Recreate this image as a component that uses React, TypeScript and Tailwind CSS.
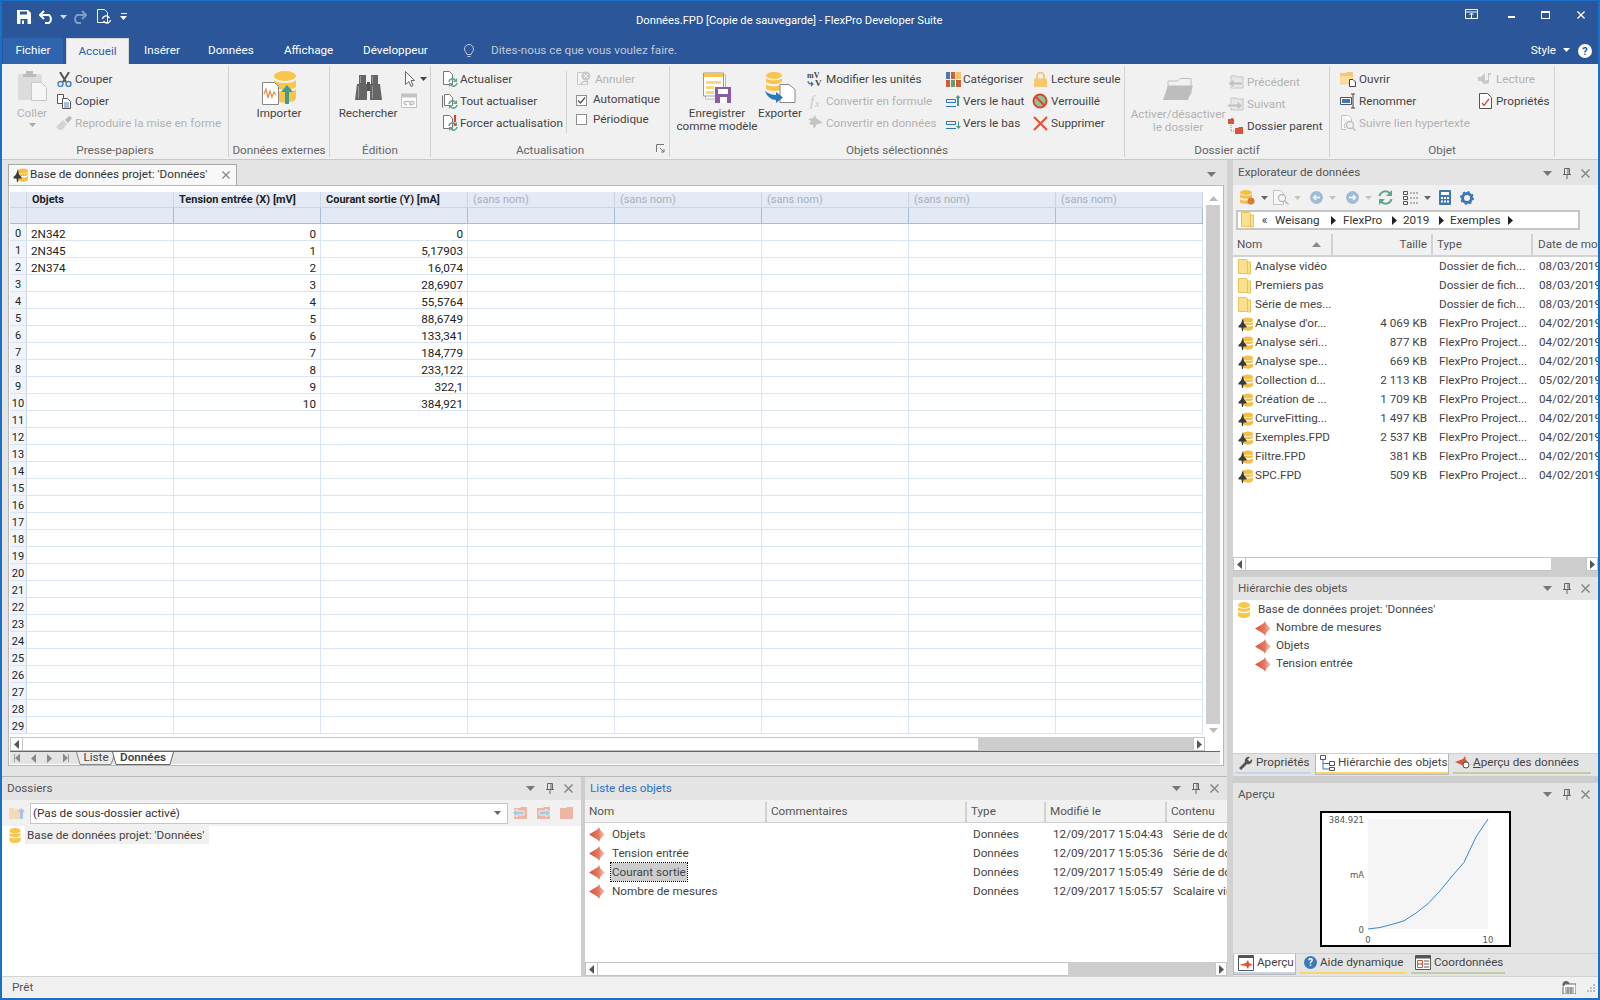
import type { ReactNode } from "react";

/* ---------- small drawings ---------- */
const Ico = ({ w = 16, h = 16, vb, children, className = "" }: { w?: number; h?: number; vb?: string; children: ReactNode; className?: string }) => (
  <svg width={w} height={h} viewBox={vb ?? `0 0 ${w} ${h}`} className={`shrink-0 ${className}`}>
    {children}
  </svg>
);

const Caret = ({ color = "#666" }: { color?: string }) => (
  <Ico w={7} h={4}><path d="M0 0h7L3.5 4z" fill={color} /></Ico>
);

const Tri = () => <Ico w={5} h={9}><path d="M0 0l5 4.5L0 9z" fill="#222" /></Ico>;

const Db = ({ w = 12, h = 16 }: { w?: number; h?: number }) => (
  <Ico w={w} h={h} vb="0 0 12 16">
    <ellipse cx="6" cy="3" rx="6" ry="3" fill="#f9c64b" />
    <path d="M0 5c1 2 11 2 12 0v2.500c0 3-12 3-12 0z" fill="#f9c64b" />
    <path d="M0 9.500c1 2 11 2 12 0V13c0 4-12 4-12 0z" fill="#f9c64b" />
  </Ico>
);

const ProjectIcon = () => (
  <Ico w={15} h={14}>
    <ellipse cx="10" cy="3" rx="5" ry="2.500" fill="#f4bf45" />
    <path d="M5 4.500c1 2 9 2 10 0v2c0 2-10 2-10 0zM5 8c1 2 9 2 10 0v3c0 3.500-10 3.500-10 0z" fill="#f4bf45" />
    <path d="M5 1l1 5.500 2.500 2.500v1.500H5.500L5 14H4l-.5-3.500H.5V9L3 6.500z" fill="#3a3a3a" />
  </Ico>
);

const Folder = () => (
  <Ico w={13} h={16}>
    <path d="M.5.500h8l1 1v13h-9z" fill="#fbe08f" stroke="#e8c35c" />
    <path d="M9.500 3h3v12h-3z" fill="#fbe08f" stroke="#e8c35c" />
  </Ico>
);

const DataIcon = ({ w = 16 }: { w?: number }) => (
  <Ico w={w} h={15} vb="0 0 16 15">
    <defs>
      <linearGradient id="dg" x1="0" x2="1" y1="0" y2="0">
        <stop offset="0" stopColor="#d8553a" />
        <stop offset="0.6" stopColor="#e27a62" />
        <stop offset="1" stopColor="#f6d3c8" />
      </linearGradient>
    </defs>
    <path d="M0 7.500L9 2l1-2 1.500 3.500L16 7.500l-4.500 4L10 15l-1-2z" fill="url(#dg)" />
  </Ico>
);

const GreenCycle = ({ x = 6, y = 7, s = 1 }: { x?: number; y?: number; s?: number }) => (
  <g transform={`translate(${x} ${y}) scale(${s})`} fill="none" stroke="#5fa68f" strokeWidth="1.600">
    <path d="M1 4a3.500 3.500 0 0 1 6-2l1 1" />
    <path d="M9 5a3.500 3.500 0 0 1-6 2L2 6" />
    <path d="M8.500 .5v3h-3M1.500 8.500v-3h3" strokeWidth="1.200" />
  </g>
);

const RefreshDoc = ({ bang, stack }: { bang?: boolean; stack?: boolean }) => (
  <Ico w={16} h={16}>
    {stack && <path d="M.5 2.500v12" stroke="#777" />}
    <path d={stack ? "M2.500 1.500h5l3 3v8h-8z" : "M1.500 .5h6l3 3v10h-9z"} fill="#fff" stroke="#777" />
    <GreenCycle />
    {bang && <path d="M13 0v7M13 8.500v2" stroke="#d9402a" strokeWidth="2.200" />}
  </Ico>
);

const Scissors = () => (
  <Ico w={15} h={15}>
    <path d="M3 0l6 10M12 0L6 10" stroke="#555" strokeWidth="2" />
    <circle cx="3.500" cy="12" r="2.500" fill="none" stroke="#4a7fb8" strokeWidth="1.400" />
    <circle cx="11.500" cy="12" r="2.500" fill="none" stroke="#4a7fb8" strokeWidth="1.400" />
  </Ico>
);

const Copy = () => (
  <Ico w={15} h={15}>
    <path d="M.5.500h6v9h-6z" fill="#fff" stroke="#555" />
    <path d="M5.500 4.500h5l3 3v7h-8z" fill="#fff" stroke="#555" />
    <path d="M7 9h5M7 11h5M7 13h5" stroke="#4a7fb8" />
  </Ico>
);

const Brush = () => (
  <Ico w={16} h={14}>
    <path d="M0 11L7 4l4 4-5 6H3z" fill="#d4d4d4" />
    <path d="M9 4l4-4 3 2-4 5z" fill="#b8b8b8" />
  </Ico>
);

const Clipboard = () => (
  <Ico w={29} h={30}>
    <rect x="0" y="3" width="24" height="26" rx="2" fill="#dcdcdc" />
    <path d="M8 3V0h7v3h3v3H5V3z" fill="#bcbcbc" />
    <path d="M13.500 11.500h10l5 5v13h-15z" fill="#f6f6f6" stroke="#c8c8c8" />
  </Ico>
);

const Import = () => (
  <Ico w={34} h={34}>
    <ellipse cx="23" cy="5" rx="11" ry="5" fill="#f9c64b" />
    <path d="M12 9c2 4 20 4 22 0v6c0 5-22 5-22 0zM12 18c2 4 20 4 22 0v9c0 6-22 6-22 0z" fill="#f9c64b" />
    <path d="M.5 11.500h12l4 4v18H.5z" fill="#fff" stroke="#888" />
    <path d="M2 23l2-5 2 9 2-7 2 6 2-5 2 3" fill="none" stroke="#e58a4c" strokeWidth="1.200" />
    <path d="M23 33V21h-4l6-7 6 7h-4v12z" fill="#3f9c8e" />
  </Ico>
);

const Binoculars = () => (
  <Ico w={27} h={25}>
    <path d="M4 0h7v9h1v16H0l2-16h2zM16 0h7v9h2l2 16H15V9h1z" fill="#666" />
    <path d="M12 7h3v9h-3z" fill="#555" />
    <path d="M5 1h1v7H5zM17 1h1v7h-1zM3 11h1v12H3zM17 11h1v12h-1z" fill="#999" />
  </Ico>
);

const Cursor = () => (
  <Ico w={11} h={16}>
    <path d="M.5.500l9 9H6l2 5-2 1-2-5-3.500 3z" fill="#fff" stroke="#666" />
  </Ico>
);

const WindowLink = () => (
  <Ico w={17} h={16}>
    <path d="M.5 3.500h15v11h-15z" fill="#fff" stroke="#c2c2c2" />
    <path d="M0 .5h16v4H0z" fill="#c2c2c2" />
    <path d="M6 11.500h-1.500a1.500 1.500 0 0 1 0-3H8a1.500 1.500 0 0 1 0 3M10 8.500h1.500a1.500 1.500 0 0 1 0 3H8" fill="none" stroke="#bdbdbd" strokeWidth="1.300" />
  </Ico>
);

function GrayCycle() {
  return <path d="M5 13a4 4 0 0 1 7-1" fill="none" stroke="#c9c9c9" strokeWidth="1.500" />;
}

const CancelDoc = () => (
  <Ico w={16} h={16}>
    <path d="M1.500 1.500h10v12h-10z" fill="#f4f4f4" stroke="#c9c9c9" />
    <circle cx="10" cy="5" r="4.500" fill="#c9c9c9" />
    <path d="M8 3l4 4M12 3L8 7" stroke="#f4f4f4" />
    <GrayCycle />
  </Ico>
);

const Check = ({ on }: { on?: boolean }) => (
  <span className="w-[11px] h-[11px] border border-[#8e8e8e] bg-white flex items-center justify-center shrink-0">
    {on && <Ico w={9} h={9}><path d="M1 4.500l2.500 2.500L8 1.500" fill="none" stroke="#555" strokeWidth="1.300" /></Ico>}
  </span>
);

const SaveTemplate = () => (
  <Ico w={28} h={32}>
    <path d="M2.500 3h20v24h-20z" fill="#fff" stroke="#bbb" />
    <path d="M.5 1h20v23H.5z" fill="#fff" stroke="#999" />
    <path d="M1 1h19v4H1z" fill="#f9c64b" />
    <path d="M3 9h15v3H3zM3 14h8v3H3zM3 19h8v3H3z" fill="#f9d77f" />
    <path d="M12 15h16v16H12z" fill="#8a5ca8" />
    <path d="M15 17h10v5H15zM17 25h7v6h-7z" fill="#fff" />
  </Ico>
);

const Export = () => (
  <Ico w={31} h={32}>
    <ellipse cx="9" cy="3.500" rx="8" ry="3.500" fill="#f9c64b" />
    <path d="M1 6c1 3 15 3 16 0v3c0 4-16 4-16 0zM1 12c1 3 15 3 16 0v4c0 4-16 4-16 0z" fill="#f9c64b" />
    <path d="M15 12.500h9l6 5v13H15z" fill="#fff" stroke="#888" />
    <path d="M0 19c4 3 8 4 11 4v-3l7 5.500-7 5.500v-3c-4 0-9-3-11-9z" fill="#2d77bb" />
  </Ico>
);

const Units = () => (
  <Ico w={16} h={16}>
    <text x="0" y="7" fontSize="8" fontWeight="700" fontFamily="Liberation Serif, serif" fill="#444">mV</text>
    <text x="8" y="15" fontSize="9" fontWeight="700" fontFamily="Liberation Serif, serif" fill="#444">V</text>
    <path d="M1 10c0 3 2 3 5 3M4 11l2 2-2 2" fill="none" stroke="#2d77bb" strokeWidth="1.200" />
  </Ico>
);

const Fx = () => (
  <Ico w={16} h={16}>
    <text x="3" y="13" fontSize="15" fontStyle="italic" fontFamily="Liberation Serif, serif" fill="#c8c8c8">f</text>
    <text x="8" y="14" fontSize="10" fontStyle="italic" fontFamily="Liberation Serif, serif" fill="#c8c8c8">x</text>
  </Ico>
);

const ToData = () => (
  <Ico w={16} h={16}>
    <path d="M1 4l5-1 2-3 1 3 7 5-6 1-3 5-1-4-4-1 2-3z" fill="#c4c4c4" />
  </Ico>
);

const Categorize = () => (
  <Ico w={15} h={15}>
    <path d="M0 0h4v7H0z" fill="#4d78b4" /><path d="M5 0h4v7H5z" fill="#cf5c3c" /><path d="M10 0h5v7h-5z" fill="#f3c467" />
    <path d="M0 8h4v7H0z" fill="#cf5c3c" /><path d="M5 8h4v7H5z" fill="#5ea26b" /><path d="M10 8h5v7h-5z" fill="#cf5c3c" />
  </Ico>
);

const MoveUp = ({ down }: { down?: boolean }) => (
  <Ico w={15} h={14}>
    <path d="M.5 5.500h9v3h-9z" fill="none" stroke="#2d77bb" />
    <path d="M0 12.500h10" stroke="#2d77bb" />
    {down ? (
      <path d="M12 5v5H10l2.500 3 2.500-3h-2V6z" fill="#3f9c8e" />
    ) : (
      <path d="M11 12V4H9.500L12 1l2.500 3H13v8z" fill="#3f9c8e" />
    )}
  </Ico>
);

const Lock = () => (
  <Ico w={13} h={15}>
    <path d="M3 7V4a3.500 3.500 0 0 1 7 0v3" fill="none" stroke="#f0c677" strokeWidth="1.800" />
    <rect x="0" y="6.500" width="13" height="8.500" fill="#f6c971" />
  </Ico>
);

const NoEntry = () => (
  <Ico w={16} h={16}>
    <circle cx="8" cy="8" r="6.500" fill="#8fc39a" stroke="#d9482e" strokeWidth="2" />
    <path d="M3.500 3.500l9 9" stroke="#d9482e" strokeWidth="2" />
  </Ico>
);

const RedX = () => <Ico w={15} h={15}><path d="M1 1l13 13M14 1L1 14" stroke="#e0573a" strokeWidth="2.200" /></Ico>;

const BigFolder = () => (
  <Ico w={30} h={22}>
    <path d="M5 10V3h10l2-2.500h11V16H5z" fill="none" stroke="#c0c0c0" />
    <path d="M5 7.500h25L25 22H0z" fill="#bdbdbd" />
  </Ico>
);

const BackFolder = ({ flip }: { flip?: boolean }) => (
  <Ico w={16} h={14}>
    <path d="M3 1h5l1 1h6v11H3z" fill="#e8e8e8" stroke="#c4c4c4" />
    <path d={flip ? "M0 7h9V4l6 4.500L9 13v-3H0z" : "M15 7H6V4L0 8.500 6 13v-3h9z"} fill="#c4c4c4" stroke="#f1f1f1" strokeWidth=".6" />
  </Ico>
);

const ParentFolder = () => (
  <Ico w={16} h={16}>
    <path d="M0 1h3V0h2l1 2v4H0z" fill="#d9523c" />
    <path d="M7 10h3l1-1h4v7H7z" fill="#d9523c" />
    <path d="M3 7v6h3" stroke="#888" strokeDasharray="1 1" fill="none" />
  </Ico>
);

const OpenFile = () => (
  <Ico w={16} h={16}>
    <path d="M0 2h6l1-1h6v5H0z" fill="#f5c877" />
    <path d="M1 5h12l-2 8H0z" fill="#fadf9f" stroke="#f0c677" strokeWidth=".5" />
    <path d="M9.500 8.500h3.500l2.500 2.500v4.500h-6z" fill="#fff" stroke="#444" />
  </Ico>
);

const Rename = () => (
  <Ico w={16} h={16}>
    <path d="M.5 4.500h11v7H.5z" fill="#fff" stroke="#555" />
    <path d="M2 6h8v4H2z" fill="#3f77b3" />
    <path d="M11 1h4M11 15h4M13 1v14" stroke="#444" />
  </Ico>
);

const FollowLink = () => (
  <Ico w={16} h={16}>
    <path d="M1.500 .5h7l3 3v3M1.500 .5v14H6" fill="#fff" stroke="#c4c4c4" />
    <circle cx="10" cy="10" r="3.500" fill="none" stroke="#bdbdbd" strokeWidth="1.300" />
    <path d="M12.500 12.500l3 3" stroke="#bdbdbd" strokeWidth="1.500" />
    <path d="M6 9a2 2 0 0 0 0 4" fill="none" stroke="#bdbdbd" />
  </Ico>
);

const Speaker = () => (
  <Ico w={15} h={14}>
    <path d="M0 5h3l4-4v12L3 9H0z" fill="#c8c8c8" />
    <path d="M10 1h3v2h-2v7a2 2 0 1 1-1-1.700z" fill="#c8c8c8" />
  </Ico>
);

const Props = () => (
  <Ico w={13} h={16}>
    <path d="M.5.500h8l4 4v11H.5z" fill="#fff" stroke="#555" />
    <path d="M3 10l2 2.500L10 6" fill="none" stroke="#d9482e" strokeWidth="1.300" />
  </Ico>
);

const Close = ({ color = "#888", s = 9 }: { color?: string; s?: number }) => (
  <Ico w={s} h={s} vb="0 0 9 9"><path d="M.5.500l8 8M8.500.5l-8 8" stroke={color} strokeWidth="1.500" /></Ico>
);

const Arrow = ({ dir, color = "#555" }: { dir: "l" | "r" | "u" | "d"; color?: string }) => {
  const d = { l: "M5 0v9L0 4.500z", r: "M0 0v9l5-4.500z", u: "M0 5h9L4.500 0z", d: "M0 0h9L4.500 5z" }[dir];
  const wide = dir === "u" || dir === "d";
  return <Ico w={wide ? 9 : 5} h={wide ? 5 : 9}><path d={d} fill={color} /></Ico>;
};

/* ---------- ribbon parts ---------- */
const Small = ({ icon, label, off, gap = "gap-[3px]" }: { icon?: ReactNode; label: string; off?: boolean; gap?: string }) => (
  <div className={`h-[22px] flex items-center whitespace-nowrap ${gap} ${off ? "text-[#b1b1b1]" : "text-[#444]"}`}>
    <span className="w-[16px] h-[16px] flex items-center justify-center shrink-0">{icon}</span>
    <span className="pt-px">{label}</span>
  </div>
);

const Big = ({ icon, label, w, off, h = "h-[39px]" }: { icon: ReactNode; label: ReactNode; w: string; off?: boolean; h?: string }) => (
  <div className={`flex flex-col items-center text-center leading-[13px] shrink-0 whitespace-nowrap ${w} ${off ? "text-[#b1b1b1]" : "text-[#444]"}`}>
    <div className={`${h} flex items-center justify-center`}>{icon}</div>
    <div>{label}</div>
  </div>
);

const Group = ({ label, w, children, launcher, cls = "" }: { label: string; w: string; children?: ReactNode; launcher?: boolean; cls?: string }) => (
  <div className={`${w} shrink-0 flex flex-col my-[2px] border-r border-[#d2d2d2]`}>
    <div className={`h-[75px] pt-[2px] flex ${cls}`}>{children}</div>
    <div className="h-[17px] pt-[3px] relative text-center text-[#666] leading-[14px] whitespace-nowrap">
      {label}
      {launcher && (
        <span className="absolute right-[4px] top-[4px]">
          <Ico w={9} h={9}><path d="M.5 8V.5H8M4 4l4 4M8 5v3H5" fill="none" stroke="#777" /></Ico>
        </span>
      )}
    </div>
  </div>
);

const Ribbon = () => (
  <div className="h-[96px] bg-[#f1f1f1] flex shrink-0 border-b border-[#c8c8c8]">
    <Group label="Presse-papiers" w="w-[227px]" cls="pl-[8px]">
      <div className="flex flex-col items-center w-[44px] shrink-0 pt-[3px] text-[#b1b1b1] leading-[13px]">
        <div className="h-[36px]"><Clipboard /></div>
        <div>Coller</div>
        <div className="mt-[3px]"><Caret color="#aaa" /></div>
      </div>
      <div className="ml-[2px]">
        <Small icon={<Scissors />} label="Couper" />
        <Small icon={<Copy />} label="Copier" />
        <Small icon={<Brush />} label="Reproduire la mise en forme" off />
      </div>
    </Group>
    <Group label="Données externes" w="w-[101px]">
      <Big w="w-full" icon={<Import />} label="Importer" />
    </Group>
    <Group label="Édition" w="w-[101px]" cls="pl-[9px]">
      <Big w="w-[58px]" icon={<Binoculars />} label="Rechercher" />
      <div className="ml-[4px]">
        <div className="h-[22px] flex items-center gap-[4px] pl-[4px]"><Cursor /><Caret color="#444" /></div>
        <div className="h-[22px] flex items-center"><WindowLink /></div>
      </div>
    </Group>
    <Group label="Actualisation" w="w-[239px]" launcher cls="pl-[11px]">
      <div className="w-[124px] shrink-0">
        <Small icon={<RefreshDoc />} label="Actualiser" gap="gap-[2px]" />
        <Small icon={<RefreshDoc stack />} label="Tout actualiser" gap="gap-[2px]" />
        <Small icon={<RefreshDoc bang />} label="Forcer actualisation" gap="gap-[2px]" />
      </div>
      <div className="w-px h-[62px] mt-[3px] bg-[#d2d2d2] shrink-0" />
      <div className="ml-[9px]">
        <Small icon={<CancelDoc />} label="Annuler" off />
        <div className="h-[20px] flex items-center gap-[6px] text-[#444]"><Check on />Automatique</div>
        <div className="h-[19px] flex items-center gap-[6px] text-[#444]"><Check />Périodique</div>
      </div>
    </Group>
    <Group label="Objets sélectionnés" w="w-[455px]" cls="pl-[9px]">
      <Big w="w-[76px]" icon={<SaveTemplate />} label={<>Enregistrer<br />comme modèle</>} />
      <Big w="w-[50px]" icon={<Export />} label="Exporter" />
      <div className="ml-[2px] w-[138px] shrink-0">
        <Small icon={<Units />} label="Modifier les unités" />
        <Small icon={<Fx />} label="Convertir en formule" off />
        <Small icon={<ToData />} label="Convertir en données" off />
      </div>
      <div className="w-[87px] shrink-0">
        <Small icon={<Categorize />} label="Catégoriser" gap="gap-[2px]" />
        <Small icon={<MoveUp />} label="Vers le haut" gap="gap-[2px]" />
        <Small icon={<MoveUp down />} label="Vers le bas" gap="gap-[2px]" />
      </div>
      <div>
        <Small icon={<Lock />} label="Lecture seule" />
        <Small icon={<NoEntry />} label="Verrouillé" />
        <Small icon={<RedX />} label="Supprimer" />
      </div>
    </Group>
    <Group label="Dossier actif" w="w-[205px]" cls="pl-[8px]">
      <div className="shrink-0 pt-px">
        <Big w="w-[90px]" off icon={<BigFolder />} label={<>Activer/désactiver<br />le dossier</>} />
      </div>
      <div className="ml-[5px] pt-[3px]">
        <Small icon={<BackFolder />} label="Précédent" off />
        <Small icon={<BackFolder flip />} label="Suivant" off />
        <Small icon={<ParentFolder />} label="Dossier parent" />
      </div>
    </Group>
    <Group label="Objet" w="w-[225px]" cls="pl-[10px]">
      <div className="w-[137px] shrink-0">
        <Small icon={<OpenFile />} label="Ouvrir" />
        <Small icon={<Rename />} label="Renommer" />
        <Small icon={<FollowLink />} label="Suivre lien hypertexte" off />
      </div>
      <div>
        <Small icon={<Speaker />} label="Lecture" off />
        <Small icon={<Props />} label="Propriétés" />
      </div>
    </Group>
  </div>
);

/* ---------- title bar ---------- */
const TitleBar = () => (
  <div className="h-[37px] bg-[#2b579a] flex shrink-0 text-white">
    <div className="w-[634px] flex items-center pl-[15px] pb-[6px] shrink-0">
      <Ico w={14} h={14}><path d="M0 0h11l3 3v11H0z" fill="#fff" /><path d="M3 1.500h7v3H3zM3.500 9h7v5h-7z" fill="#2b579a" /><path d="M5 10.500h2v3.500H5z" fill="#fff" /></Ico>
      <span className="ml-[8px]"><Ico w={17} h={14}><path d="M5 1L1 5l4 4M1 5h9a5 5 0 0 1 0 8H6" fill="none" stroke="#fff" strokeWidth="2" /></Ico></span>
      <span className="ml-[4px]"><Caret color="#d0dcf0" /></span>
      <span className="ml-[4px]"><Ico w={16} h={14}><path d="M11 1l4 4-4 4M15 5H6a5 5 0 0 0 0 8h4" fill="none" stroke="#7f9cc6" strokeWidth="2" /></Ico></span>
      <span className="ml-[10px]"><Ico w={15} h={15}><path d="M.5 .5h7l3 3v10H.5z" fill="none" stroke="#fff" /><g transform="translate(5 6)" fill="none" stroke="#fff" strokeWidth="1.300"><path d="M.5 4a3.500 3.500 0 0 1 6-2l1 1M8.500 5a3.500 3.500 0 0 1-6 2l-1-1" /></g></Ico></span>
      <span className="ml-[8px] flex flex-col items-center gap-[2px]"><span className="w-[6px] h-px bg-white" /><Caret color="#fff" /></span>
    </div>
    <div className="w-[320px] shrink-0 pt-[12px] leading-[16px] whitespace-nowrap text-[11.2px]">Données.FPD [Copie de sauvegarde] - FlexPro Developer Suite</div>
    <div className="flex-1 flex justify-end items-start pt-[8px] pr-[13px]">
      <Ico w={14} h={11}><path d="M.5.500h12v9H.5zM.5 3h12M6.500 9V4.500M4.500 6l2-2 2 2" fill="none" stroke="#fff" /></Ico>
      <span className="ml-[29px] mt-[7px] w-[7px] h-[2px] bg-white" />
      <span className="ml-[26px] mt-[2px] w-[9px] h-[8px] border border-white border-t-2" />
      <span className="ml-[27px] mt-[2px]"><Close color="#fff" s={8} /></span>
    </div>
  </div>
);

const tabs = [
  ["Insérer", "w-[64px] pl-[15px]"],
  ["Données", "w-[76px] pl-[15px]"],
  ["Affichage", "w-[79px] pl-[15px]"],
  ["Développeur", "w-[101px] pl-[15px]"],
];

const TabBar = () => (
  <div className="h-[26px] bg-[#2b579a] flex items-end shrink-0 text-white pl-[1px]">
    <div className="w-[60px] h-[26px] bg-[#2f64ae] flex items-center justify-center">Fichier</div>
    <div className="ml-[3px] w-[63px] h-[26px] bg-[#f1f1f1] text-[#2b5fb0] flex items-center justify-center border-t border-x border-[#d5d5d5]">Accueil</div>
    {tabs.map(([t, cls]) => (
      <div key={t} className={`${cls} h-[26px] flex items-center shrink-0`}>{t}</div>
    ))}
    <div className="ml-[15px] h-[26px] flex items-center">
      <Ico w={10} h={14}><path d="M3 10.500C2 8 .5 7.500 .5 5a4.500 4.500 0 0 1 9 0c0 2.500-1.500 3-2.500 5.500zM3.500 12.500h3" fill="none" stroke="#c0cde2" /></Ico>
    </div>
    <div className="ml-[17px] h-[26px] flex items-center text-[#c0c8d8]">Dites-nous ce que vous voulez faire.</div>
    <div className="ml-auto h-[26px] flex items-center pr-[6px]">
      <span>Style</span>
      <span className="ml-[7px] mb-[3px]"><Caret color="#fff" /></span>
      <span className="ml-[8px] w-[14px] h-[14px] rounded-full bg-white text-[#2b579a] text-[11px] font-bold flex items-center justify-center leading-none">?</span>
    </div>
  </div>
);

/* ---------- docking parts ---------- */
const PanelButtons = () => (
  <div className="flex items-center">
    <span className="w-[19px] flex justify-center"><Arrow dir="d" color="#777" /></span>
    <span className="w-[19px] flex justify-center">
      <Ico w={8} h={11}><path d="M1.500 .5h5v6h-5zM0 6.500h8M4 7v4M5 1v5" fill="none" stroke="#666" /></Ico>
    </span>
    <span className="w-[19px] flex justify-center"><Close /></span>
  </div>
);

const PanelHeader = ({ title, blue }: { title: string; blue?: boolean }) => (
  <div className={`h-[23px] shrink-0 flex items-center justify-between pl-[5px] pr-[3px] bg-[#e4e4e4] ${blue ? "text-[#2b6fcf]" : "text-[#555]"}`}>
    <span>{title}</span>
    <PanelButtons />
  </div>
);

const HScroll = ({ thumb, cls = "" }: { thumb: string; cls?: string }) => (
  <div className={`h-[14px] shrink-0 flex bg-[#cdcdcd] ${cls}`}>
    <span className="w-[13px] bg-white border border-[#c4c4c4] flex items-center justify-center"><Arrow dir="l" /></span>
    <span className={`${thumb} bg-white border-y border-[#c4c4c4]`} />
    <span className="ml-auto w-[12px] bg-white border border-[#c4c4c4] flex items-center justify-center"><Arrow dir="r" /></span>
  </div>
);

const ColHead = ({ w, label, right, sort }: { w: string; label: string; right?: boolean; sort?: boolean }) => (
  <div className={`${w} shrink-0 h-full flex items-center px-[4px] border-r-2 border-[#d2d2d2] overflow-hidden whitespace-nowrap ${right ? "justify-end" : "justify-between"}`}>
    <span>{label}</span>
    {sort && <span className="mr-[6px]"><Arrow dir="u" color="#888" /></span>}
  </div>
);

const BottomTab = ({ w, icon, label, bar, active, cls = "pl-[4px]" }: { w: string; icon: ReactNode; label: ReactNode; bar: string; active?: boolean; cls?: string }) => (
  <div className={`${w} shrink-0 flex flex-col ${active ? "h-[21px] bg-white border-x border-b border-[#b8b8b8]" : "h-[20px]"}`}>
    <div className={`flex-1 flex items-center gap-[3px] text-[#444] whitespace-nowrap ${cls}`}>{icon}<span>{label}</span></div>
    <div className={`h-[3px] ${bar}`} />
  </div>
);

/* ---------- data ---------- */
const names = ["2N342", "2N345", "2N374"];
const current = ["0", "5,17903", "16,074", "28,6907", "55,5764", "88,6749", "133,341", "184,779", "233,122", "322,1", "384,921"];
const headers = ["Objets", "Tension entrée (X) [mV]", "Courant sortie (Y) [mA]"];
const emptyCols = [0, 1, 2, 3, 4];
const rows = Array.from({ length: 30 }, (_, i) => i);

const files = [
  ["Analyse vidéo", "", "Dossier de fich...", "08/03/2019"],
  ["Premiers pas", "", "Dossier de fich...", "08/03/2019"],
  ["Série de mes...", "", "Dossier de fich...", "08/03/2019"],
  ["Analyse d'or...", "4 069 KB", "FlexPro Project...", "04/02/2019"],
  ["Analyse séri...", "877 KB", "FlexPro Project...", "04/02/2019"],
  ["Analyse spe...", "669 KB", "FlexPro Project...", "04/02/2019"],
  ["Collection d...", "2 113 KB", "FlexPro Project...", "05/02/2019"],
  ["Création de ...", "1 709 KB", "FlexPro Project...", "04/02/2019"],
  ["CurveFitting...", "1 497 KB", "FlexPro Project...", "04/02/2019"],
  ["Exemples.FPD", "2 537 KB", "FlexPro Project...", "04/02/2019"],
  ["Filtre.FPD", "381 KB", "FlexPro Project...", "04/02/2019"],
  ["SPC.FPD", "509 KB", "FlexPro Project...", "04/02/2019"],
];

const objects = [
  ["Objets", "12/09/2017 15:04:43", "Série de données"],
  ["Tension entrée", "12/09/2017 15:05:36", "Série de données"],
  ["Courant sortie", "12/09/2017 15:05:49", "Série de données"],
  ["Nombre de mesures", "12/09/2017 15:05:57", "Scalaire virgule"],
];

/* ---------- data grid ---------- */
const cellBase = "w-[147px] shrink-0 border-r border-[#dbe5f2] px-[4px] overflow-hidden whitespace-nowrap";

const DataGrid = () => (
  <div className="w-[1193px] shrink-0 text-[#222]">
    <div className="h-[16px] flex bg-[#e3eaf6] font-bold text-[11px] leading-[16px] border-b border-[#c9d6e8]">
      <div className="w-[17px] border-r border-[#c9d6e8]" />
      {headers.map((h) => (
        <div key={h} className="w-[147px] shrink-0 border-r border-[#c9d6e8] px-[5px] whitespace-nowrap">{h}</div>
      ))}
      {emptyCols.map((c) => (
        <div key={c} className="w-[147px] shrink-0 border-r border-[#c9d6e8] px-[5px] text-[#a8b0bc] whitespace-nowrap font-normal">(sans nom)</div>
      ))}
    </div>
    <div className="h-[16px] flex bg-[#e3eaf6] border-b border-[#a9bcd6]">
      <div className="w-[17px] border-r border-[#c9d6e8]" />
      {[...headers, ...emptyCols].map((c) => (
        <div key={c} className="w-[147px] shrink-0 border-r border-[#a9bcd6]" />
      ))}
    </div>
    {rows.map((r) => (
      <div key={r} className="h-[17px] flex border-b border-[#dbe5f2] leading-[20px]">
        <div className="w-[17px] shrink-0 bg-[#f1f5fb] border-r border-[#c9d6e8] text-center text-[11px] overflow-hidden">{r}</div>
        <div className={cellBase}>{names[r]}</div>
        <div className={`${cellBase} text-right`}>{r <= 10 ? r : ""}</div>
        <div className={`${cellBase} text-right`}>{current[r]}</div>
        {emptyCols.map((c) => (
          <div key={c} className={cellBase} />
        ))}
      </div>
    ))}
  </div>
);

const SheetTabs = () => (
  <div className="h-[13px] shrink-0 flex items-center bg-[#e4e4e4] border-t border-[#666] text-[#444]">
    <div className="w-[66px] pl-[4px] flex items-center gap-[11px] shrink-0">
      <Ico w={6} h={8}><path d="M.5 0v8M6 0v8L1.500 4z" stroke="#888" strokeWidth=".8" fill="#888" /></Ico>
      <Arrow dir="l" color="#888" />
      <Arrow dir="r" color="#888" />
      <Ico w={6} h={8}><path d="M5.500 0v8M0 0v8l4.500-4z" stroke="#888" strokeWidth=".8" fill="#888" /></Ico>
    </div>
    <div className="relative h-[13px] w-[40px] flex items-center justify-center leading-none">
      <svg width={40} height={13} className="absolute inset-0"><path d="M.5 0L4 12.500H35L39.500 0" fill="#ececec" stroke="#888" /></svg>
      <span className="relative">Liste</span>
    </div>
    <div className="relative h-[13px] w-[62px] -ml-[4px] flex items-center justify-center font-semibold leading-none">
      <svg width={62} height={13} className="absolute inset-0"><path d="M.5 0L4 12.500H58L61.500 0" fill="#fff" stroke="#666" /></svg>
      <span className="relative">Données</span>
    </div>
  </div>
);

const Chart = () => {
  const values = [0, 5.17903, 16.074, 28.6907, 55.5764, 88.6749, 133.341, 184.779, 233.122, 322.1, 384.921];
  const points = values.map((v, i) => `${46 + i * 12},${116 - (v / 384.921) * 110}`).join(" ");
  return (
    <div className="w-[191px] h-[136px] bg-white border-2 border-black shrink-0">
      <svg width={187} height={132} viewBox="0 0 187 132">
        <rect x="46" y="6" width="120" height="110" fill="#f5f5f5" />
        <polyline points={points} fill="none" stroke="#3b87d0" strokeWidth="1" />
        <g fontSize="8.500" fontFamily="DejaVu Sans, sans-serif" fill="#555">
          <text x="42" y="10" textAnchor="end">384.921</text>
          <text x="42" y="65" textAnchor="end">mA</text>
          <text x="42" y="120" textAnchor="end">0</text>
          <text x="46" y="130" textAnchor="middle">0</text>
          <text x="166" y="130" textAnchor="middle">10</text>
        </g>
      </svg>
    </div>
  );
};

const NavCircle = ({ fwd }: { fwd?: boolean }) => (
  <Ico w={13} h={13}>
    <circle cx="6.500" cy="6.500" r="6.500" fill="#9ebcd9" />
    <path d={fwd ? "M3 6.500h6M7 4l2.500 2.500L7 9" : "M10 6.500H4M6 4L3.500 6.500 6 9"} fill="none" stroke="#fff" strokeWidth="1.300" />
  </Ico>
);

/* ---------- panels ---------- */
const Explorer = () => (
  <div className="h-[417px] flex flex-col shrink-0 bg-[#e4e4e4]">
    <div className="h-[25px] pt-px shrink-0 flex items-center justify-between pl-[5px] pr-[3px] text-[#555]">
      <span>Explorateur de données</span>
      <PanelButtons />
    </div>
    <div className="h-[25px] shrink-0 bg-[#f1f1f1] flex items-center pl-[7px]">
      <Ico w={15} h={15}><ellipse cx="6" cy="2.500" rx="6" ry="2.500" fill="#f4bf45" /><path d="M0 4c1 2 11 2 12 0v3c0 2-12 2-12 0zM0 9c1 2 11 2 12 0v3c0 2.500-12 2.500-12 0z" fill="#f4bf45" /><circle cx="11" cy="11" r="3.500" fill="#e07b2e" /></Ico>
      <span className="ml-[6px]"><Caret /></span>
      <span className="ml-[5px]"><Ico w={16} h={15}><path d="M.5 .5h7l3 3v11H.5z" fill="#f7f7f7" stroke="#c4c4c4" /><circle cx="9" cy="8" r="3.500" fill="#f7f7f7" stroke="#b8b8b8" strokeWidth="1.300" /><path d="M11.500 10.500l4 4" stroke="#b8b8b8" strokeWidth="1.500" /></Ico></span>
      <span className="ml-[5px]"><Caret color="#c4c4c4" /></span>
      <span className="ml-[9px]"><NavCircle /></span>
      <span className="ml-[6px]"><Caret color="#c4c4c4" /></span>
      <span className="ml-[10px]"><NavCircle fwd /></span>
      <span className="ml-[6px]"><Caret color="#c4c4c4" /></span>
      <span className="ml-[6px]"><Ico w={15} h={15}><path d="M1.500 6a6 6 0 0 1 10-3l1.500 1.500M13.500 9a6 6 0 0 1-10 3L2 10.500" fill="none" stroke="#5fa68f" strokeWidth="2" /><path d="M14 0v6H8zM1 15V9h6z" fill="#5fa68f" /></Ico></span>
      <span className="ml-[10px]"><Ico w={16} h={14}><path d="M.5.500h4v3h-4zM.5 5.500h4v3h-4zM.5 10.500h4v3h-4z" fill="none" stroke="#555" /><path d="M7 2h9M7 7h9M7 12h9" stroke="#777" strokeDasharray="2 1" /></Ico></span>
      <span className="ml-[5px]"><Caret /></span>
      <span className="ml-[8px]"><Ico w={12} h={15}><rect width="12" height="15" rx="1" fill="#3f77b3" /><path d="M2 2h8v3H2z" fill="#fff" /><path d="M2 7h2v2H2zM5 7h2v2H5zM8 7h2v2H8zM2 10.500h2v2H2zM5 10.500h2v2H5zM8 10.500h2v2H8z" fill="#fff" /></Ico></span>
      <span className="ml-[9px]"><Ico w={14} h={14}><circle cx="7" cy="7" r="4.500" fill="none" stroke="#3f77b3" strokeWidth="3" /><circle cx="7" cy="7" r="6" fill="none" stroke="#3f77b3" strokeWidth="2" strokeDasharray="2 2.700" /></Ico></span>
    </div>
    <div className="h-[21px] shrink-0 bg-[#f1f1f1] px-[3px] pb-px pr-[18px]">
      <div className="h-[20px] bg-white border-2 border-[#c6c6c6] flex items-center pl-[3px] text-[#333]">
        <Folder />
        <span className="w-[21px] text-center text-[12px] leading-none">«</span>
        <span className="w-[56px] pt-px">Weisang</span>
        <span className="w-[12px]"><Tri /></span>
        <span className="w-[49px] pt-px">FlexPro</span>
        <span className="w-[11px]"><Tri /></span>
        <span className="w-[36px] pt-px">2019</span>
        <span className="w-[11px]"><Tri /></span>
        <span className="w-[58px] pt-px">Exemples</span>
        <Tri />
      </div>
    </div>
    <div className="h-[26px] pt-[3px] shrink-0 flex bg-[#f1f1f1] border-b-2 border-[#d2d2d2] text-[#555] leading-none">
      <ColHead w="w-[100px]" label="Nom" sort />
      <ColHead w="w-[100px]" label="Taille" right />
      <ColHead w="w-[100px]" label="Type" />
      <div className="pl-[5px] self-center whitespace-nowrap overflow-hidden">Date de mo</div>
    </div>
    <div className="flex-1 bg-white overflow-hidden text-[#444]">
      {files.map((f, i) => (
        <div key={f[0]} className="h-[19px] pt-px flex items-center whitespace-nowrap">
          <span className="w-[22px] pl-[5px] shrink-0 flex">{i < 3 ? <Folder /> : <ProjectIcon />}</span>
          <span className="w-[102px] shrink-0 overflow-hidden">{f[0]}</span>
          <span className="w-[70px] shrink-0 text-right">{f[1]}</span>
          <span className="ml-[12px] w-[100px] shrink-0">{f[2]}</span>
          <span>{f[3]}</span>
        </div>
      ))}
    </div>
    <HScroll thumb="w-[305px]" />
    <div className="h-[6px] shrink-0 bg-[#cdcdcd]" />
  </div>
);

const Hierarchy = () => (
  <div className="h-[199px] flex flex-col shrink-0 bg-[#e4e4e4]">
    <PanelHeader title="Hiérarchie des objets" />
    <div className="flex-1 bg-white text-[#444] pt-[1px]">
      <div className="h-[18px] flex items-center pl-[5px] gap-[8px]"><Db /><span>Base de données projet: 'Données'</span></div>
      {["Nombre de mesures", "Objets", "Tension entrée"].map((n) => (
        <div key={n} className="h-[18px] flex items-center pl-[22px] gap-[5px]"><DataIcon /><span>{n}</span></div>
      ))}
    </div>
    <div className="h-[23px] shrink-0 flex items-start pl-[2px] gap-[4px] border-t border-[#cfcfcf] bg-[#e4e4e4]">
      <BottomTab w="w-[76px]" bar="bg-[#c6d3ea]" label="Propriétés" icon={<Ico w={14} h={14}><path d="M0 12l6-6a4 4 0 0 1 5-5L8.500 3.500l2 2L13 3a4 4 0 0 1-5 5l-6 6z" fill="#555" /></Ico>} />
      <BottomTab w="w-[134px]" active bar="bg-[#fbd46d]" label="Hiérarchie des objets" icon={<Ico w={15} h={16}><path d="M.5.500h5v4h-5zM9.500 6.500h5v4h-5zM9.500 12.500h5v3h-5z" fill="#fff" stroke="#555" /><path d="M3 5v9h6M3 8.500h6" fill="none" stroke="#2d77bb" /></Ico>} />
      <BottomTab w="w-[138px]" cls="pl-[2px]" bar="bg-[#c1cea5]" label={<><span className="underline">A</span>perçu des données</>} icon={<Ico w={15} h={14}><path d="M0 6l8-3 2-3 1 4 2 2-3 3-1 3-2-3z" fill="#d9553a" /><circle cx="11" cy="9" r="3" fill="#fff" stroke="#555" /></Ico>} />
    </div>
  </div>
);

const Preview = () => (
  <div className="flex-1 flex flex-col bg-[#e4e4e4] min-h-0">
    <PanelHeader title="Aperçu" />
    <div className="flex-1 flex justify-center pt-[5px]">
      <Chart />
    </div>
    <div className="h-[23px] shrink-0 flex items-start gap-[4px] border-t border-[#cfcfcf]">
      <BottomTab w="w-[63px]" active bar="bg-[#c6d3ea]" label="Aperçu" icon={<Ico w={16} h={16}><path d="M.5.500h15v15H.5z" fill="#fff" stroke="#555" /><path d="M1 1h14v2H1z" fill="#555" /><path d="M1 10l7-2 2-3 1 3 4 2-4 1-1 3-2-3z" fill="#d9553a" /></Ico>} />
      <BottomTab w="w-[107px]" bar="bg-[#fbd46d]" label="Aide dynamique" icon={<span className="w-[13px] h-[13px] rounded-full bg-[#3b78b8] text-white text-[10px] font-bold flex items-center justify-center leading-none">?</span>} />
      <BottomTab w="w-[94px]" bar="bg-[#c1cea5]" label="Coordonnées" icon={<Ico w={16} h={15}><path d="M.5.500h15v14H.5z" fill="#fff" stroke="#555" /><path d="M1 1h14v2.500H1z" fill="#555" /><path d="M2.500 5.500h5v7h-5z" fill="none" stroke="#d9553a" /><path d="M3 9h4M9 6h5M9 9h5M9 12h5" stroke="#555" /></Ico>} />
    </div>
  </div>
);

const MiniFolder = ({ arrow }: { arrow?: "l" | "r" }) => (
  <Ico w={17} h={14}>
    <path d="M2 2h6l1-1h6v12H2z" fill="#edb5a3" />
    {arrow === "l" && <path d="M0 7l5-4v2h7v4H5v2z" fill="#a9c8e4" stroke="#fff" strokeWidth=".7" />}
    {arrow === "r" && <path d="M16 7l-5-4v2H4v4h7v2z" fill="#a9c8e4" stroke="#fff" strokeWidth=".7" />}
  </Ico>
);

const Folders = () => (
  <div className="w-[579px] shrink-0 flex flex-col bg-white">
    <PanelHeader title="Dossiers" />
    <div className="h-[26px] shrink-0 bg-[#f1f1f1] flex items-center pl-[6px]">
      <Ico w={17} h={16}><path d="M1 3h5l1 1h6v10H1z" fill="#f2dcb8" /><path d="M12 14V7h-2l3.500-4L17 7h-2v7z" fill="#a9c4de" /></Ico>
      <div className="ml-[5px] w-[478px] h-[21px] bg-white border border-[#c6c6c6] flex items-center justify-between pl-[2px] pr-[6px] text-[#333]">
        <span className="pt-px">(Pas de sous-dossier activé)</span>
        <Caret />
      </div>
      <span className="ml-[4px]"><MiniFolder arrow="l" /></span>
      <span className="ml-[6px]"><MiniFolder arrow="r" /></span>
      <span className="ml-[6px]"><MiniFolder /></span>
    </div>
    <div className="text-[#444]">
      <div className="h-[18px] flex items-center pl-[7px]">
        <Db w={12} h={15} />
        <span className="ml-[4px] bg-[#f0f0f0] px-[2px] h-[18px] leading-[18px] w-[184px] whitespace-nowrap">Base de données projet: 'Données'</span>
      </div>
    </div>
  </div>
);

const ObjectList = () => (
  <div className="flex-1 flex flex-col bg-white min-w-0">
    <PanelHeader title="Liste des objets" blue />
    <div className="h-[23px] pt-[2px] shrink-0 flex bg-[#f1f1f1] border-b border-[#d2d2d2] text-[#555]">
      <ColHead w="w-[182px]" label="Nom" />
      <ColHead w="w-[200px]" label="Commentaires" />
      <ColHead w="w-[79px]" label="Type" />
      <ColHead w="w-[121px]" label="Modifié le" />
      <div className="pl-[4px] self-center">Contenu</div>
    </div>
    <div className="flex-1 text-[#444] overflow-hidden pt-[2px]">
      {objects.map((o, i) => (
        <div key={o[0]} className="h-[19px] flex items-center whitespace-nowrap">
          <span className="w-[26px] pl-[4px] shrink-0 flex"><DataIcon /></span>
          <span className="w-[362px] shrink-0">
            <span className={i === 2 ? "bg-[#cdcdcd] outline-1 outline-dotted outline-black py-[2px] px-[1px]" : "px-[1px]"}>{o[0]}</span>
          </span>
          <span className="w-[80px] shrink-0">Données</span>
          <span className="w-[120px] shrink-0">{o[1]}</span>
          <span>{o[2]}</span>
        </div>
      ))}
    </div>
    <HScroll thumb="w-[470px]" />
  </div>
);

const DocArea = () => (
  <div className="h-[617px] shrink-0 flex flex-col pt-[4px] pb-[10px] pl-[6px] pr-[3px] bg-[#e4e4e4] border-b border-[#b8b8b8]">
    <div className="h-[21px] shrink-0 flex items-end justify-between">
      <div className="w-[229px] h-[21px] bg-[#f8f8f8] border-x border-t border-[#a8a8a8] flex items-center pl-[4px] gap-[2px] text-[#333] whitespace-nowrap">
        <ProjectIcon />
        <span className="flex-1">Base de données projet: 'Données'</span>
        <span className="mr-[6px]"><Close s={8} /></span>
      </div>
      <span className="mb-[8px] mr-[8px]"><Arrow dir="d" color="#777" /></span>
    </div>
    <div className="flex-1 bg-white border border-[#b8b8b8] pt-[6px] pl-px pr-[3px] pb-[3px] flex flex-col min-h-0">
      <div className="h-[545px] shrink-0 flex overflow-hidden">
        <DataGrid />
        <div className="ml-[3px] flex-1 flex flex-col bg-[#cdcdcd]">
          <span className="h-[13px] bg-white flex items-center justify-center"><Arrow dir="u" color="#bbb" /></span>
          <span className="flex-1" />
          <span className="h-[13px] bg-white flex items-center justify-center"><Arrow dir="d" color="#bbb" /></span>
        </div>
      </div>
      <HScroll thumb="w-[955px]" cls="w-[1195px]" />
      <SheetTabs />
    </div>
  </div>
);

export default function App() {
  return (
    <div className="w-[1600px] h-[1000px] overflow-hidden flex flex-col border-x-2 border-t border-b-2 border-[#1a6fc9] bg-[#e4e4e4] text-[11.7px] leading-normal font-['Roboto',sans-serif]">
      <TitleBar />
      <TabBar />
      <Ribbon />
      <div className="h-[816px] flex min-h-0">
        <div className="w-[1225px] shrink-0 flex flex-col">
          <DocArea />
          <div className="flex-1 flex min-h-0">
            <Folders />
            <div className="w-[4px] shrink-0 bg-[#cdcdcd]" />
            <ObjectList />
          </div>
        </div>
        <div className="w-[6px] shrink-0 bg-[#d2d2d2]" />
        <div className="flex-1 flex flex-col min-w-0">
          <Explorer />
          <Hierarchy />
          <div className="h-[7px] shrink-0 bg-[#cdcdcd]" />
          <Preview />
        </div>
      </div>
      <div className="h-[22px] shrink-0 bg-[#f1f1f1] flex items-center justify-between pl-[10px] pr-[3px] text-[#555] border-t border-[#d2d2d2]">
        <span>Prêt</span>
        <div className="flex items-center gap-[10px]">
          <Ico w={14} h={13}><circle cx="4" cy="3.500" r="3.500" fill="#666" /><path d="M4 3h10v10H1V6" fill="#fff" stroke="#666" /><path d="M3 7h9M3 9h9M3 11h9M6 6v7M9 6v7" stroke="#777" /></Ico>
          <Ico w={9} h={9}><path d="M7 1h2v2H7zM4 4h2v2H4zM7 4h2v2H7zM1 7h2v2H1zM4 7h2v2H4zM7 7h2v2H7z" fill="#bdbdbd" /></Ico>
        </div>
      </div>
    </div>
  );
}
